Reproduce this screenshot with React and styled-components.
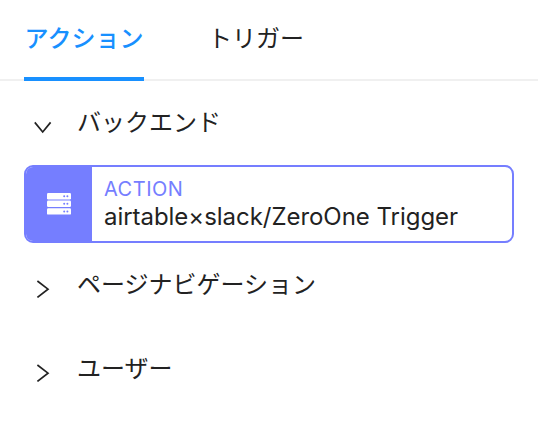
import React, { useState } from 'react';
import styled, { createGlobalStyle } from 'styled-components';

const tabs = ['アクション', 'トリガー'];

const groups = [
  {
    name: 'バックエンド',
    actions: ['airtable×slack/ZeroOne Trigger'],
  },
  { name: 'ページナビゲーション', actions: [] },
  { name: 'ユーザー', actions: [] },
];

const ServerIcon = () => (
  <svg width="24" height="22" viewBox="0 0 24 22">
    {[0, 7.6, 15.2].map((y) => (
      <g key={y}>
        <rect x="0" y={y} width="24" height="6.4" rx="1.2" fill="#ffffff" />
        <circle cx="17.2" cy={y + 3.2} r="1" fill="#757eff" />
        <circle cx="20.4" cy={y + 3.2} r="1" fill="#757eff" />
      </g>
    ))}
  </svg>
);

const Chevron = ({ open }) => (
  <svg width="18" height="18" viewBox="0 0 18 18" fill="none" stroke="#222222" strokeWidth="1.7">
    {open ? <path d="M0.8 4.4L8.7 14L16.6 4.4" /> : <path d="M3.4 1L14 9.2L3.4 17.4" />}
  </svg>
);

const App = () => {
  const [tab, setTab] = useState(0);
  const [opened, setOpened] = useState(0);

  return (
    <Panel>
      <GlobalStyle />
      <Tabs>
        {tabs.map((name, i) => (
          <Tab key={name} $active={tab === i} onClick={() => setTab(i)}>
            {name}
          </Tab>
        ))}
      </Tabs>
      {groups.map((group, i) => (
        <div key={group.name}>
          <GroupHeader onClick={() => setOpened(opened === i ? -1 : i)}>
            <Arrow>
              <Chevron open={opened === i} />
            </Arrow>
            <GroupName>{group.name}</GroupName>
          </GroupHeader>
          {opened === i &&
            group.actions.map((action) => (
              <Card key={action}>
                <CardIcon>
                  <ServerIcon />
                </CardIcon>
                <CardBody>
                  <CardType>ACTION</CardType>
                  <CardTitle>{action}</CardTitle>
                </CardBody>
              </Card>
            ))}
        </div>
      ))}
    </Panel>
  );
};

export default App;

const GlobalStyle = createGlobalStyle`
  * {
    box-sizing: border-box;
  }
  body {
    margin: 0;
    background: #ffffff;
  }
`;

const Panel = styled.div`
  width: 538px;
  height: 440px;
  overflow: hidden;
  background: #ffffff;
  color: #222222;
  font-family: 'Inter', 'Noto Sans CJK JP', sans-serif;
  font-size: 24px;
`;

const Tabs = styled.div`
  display: flex;
  gap: 64px;
  height: 81px;
  padding: 0 24px;
  box-shadow: inset 0 -2px 0 #f0f0f0;
`;

const Tab = styled.button`
  min-width: ${(props) => (props.$active ? '120px' : '0')};
  height: 81px;
  padding: 0 0 3px;
  border: none;
  border-bottom: 4px solid ${(props) => (props.$active ? '#1890ff' : 'transparent')};
  background: none;
  color: ${(props) => (props.$active ? '#1890ff' : '#222222')};
  font-family: 'Noto Sans CJK JP', sans-serif;
  font-weight: ${(props) => (props.$active ? 500 : 400)};
  font-size: 24px;
  line-height: 36px;
  white-space: nowrap;
  cursor: pointer;
`;

const GroupHeader = styled.div`
  display: flex;
  align-items: center;
  gap: 25px;
  height: 84px;
  padding: 0 34px;
  cursor: pointer;
`;

const Arrow = styled.span`
  display: flex;
  padding-top: 7px;
`;

const GroupName = styled.span`
  font-family: 'Noto Sans CJK JP', sans-serif;
  line-height: 36px;
  padding-bottom: 4px;
`;

const Card = styled.div`
  display: flex;
  height: 78px;
  margin: 0 24px;
  border: 2px solid #757eff;
  border-radius: 9px;
  overflow: hidden;
`;

const CardIcon = styled.div`
  display: flex;
  align-items: center;
  justify-content: center;
  width: 66px;
  background: #757eff;
`;

const CardBody = styled.div`
  display: flex;
  flex-direction: column;
  padding: 8px 12px;
  white-space: nowrap;
`;

const CardType = styled.span`
  color: #757eff;
  font-size: 20px;
  line-height: 28px;
  letter-spacing: 0.5px;
`;

const CardTitle = styled.span`
  line-height: 28px;
  letter-spacing: -0.04px;
`;
